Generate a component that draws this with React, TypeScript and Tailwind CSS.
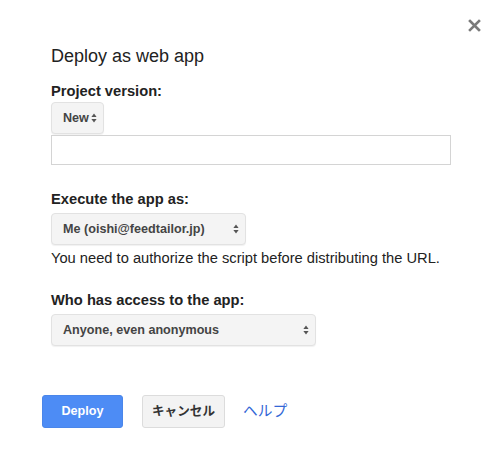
import React from 'react';

const font = { fontFamily: '"Liberation Sans", Arial, "Noto Sans CJK JP", sans-serif' };

const Arrows = () => (
  <svg width="6" height="10" viewBox="0 0 6 10" className="shrink-0">
    <path d="M3 0.5 L5.6 4 H0.4 Z" fill="#555" />
    <path d="M3 9.5 L5.6 6 H0.4 Z" fill="#555" />
  </svg>
);

const Select = ({ label, width }: { label: string; width: string }) => (
  <div
    className={`${width} h-[32px] flex items-center justify-between pl-[11px] pr-[6px] rounded-[4px] border border-[#e2e2e2] bg-[#f4f4f4] shadow-[0_1px_1px_rgba(0,0,0,0.06)] text-[12.6px] font-bold text-[#444]`}
  >
    <span>{label}</span>
    <Arrows />
  </div>
);

const Label = ({ children, className = '' }: { children: React.ReactNode; className?: string }) => (
  <div className={`text-[14.7px] leading-[17px] font-bold text-[#222] ${className}`}>{children}</div>
);

export default function App() {
  return (
    <div className="relative w-[500px] h-[453px] bg-white overflow-hidden" style={font}>
      {/* close */}
      <button className="absolute left-[467px] top-[18px] w-[14px] h-[14px] flex items-center justify-center">
        <svg width="13" height="13" viewBox="0 0 13 13">
          <path d="M2 2 L11 11 M11 2 L2 11" stroke="#7a7a7a" strokeWidth="2.6" strokeLinecap="square" />
        </svg>
      </button>

      <div className="pl-[42px] pt-[46px]">
        <div className="pl-[9px]">
          <h1 className="text-[18px] leading-[21px] text-[#222]">Deploy as web app</h1>

          <Label className="mt-[16px]">Project version:</Label>
          <div className="mt-[2px]">
            <Select label="New" width="w-[53px]" />
          </div>
          <input
            className="mt-[1px] block w-[400px] h-[30px] border border-[#d4d4d4] bg-white outline-none"
            readOnly
          />

          <Label className="mt-[26px]">Execute the app as:</Label>
          <div className="mt-[5px]">
            <Select label="Me (oishi@feedtailor.jp)" width="w-[195px]" />
          </div>
          <p className="mt-[5px] text-[14.7px] leading-[17px] text-[#222]">
            You need to authorize the script before distributing the URL.
          </p>

          <Label className="mt-[25px]">Who has access to the app:</Label>
          <div className="mt-[5px]">
            <Select label="Anyone, even anonymous" width="w-[265px]" />
          </div>
        </div>

        <div className="mt-[49px] flex items-center">
          <button className="w-[81px] h-[33px] rounded-[3px] bg-[#4d8cf5] border border-[#4a86ea] text-white text-[12.6px] font-bold">
            Deploy
          </button>
          <button className="ml-[19px] w-[83px] h-[33px] rounded-[3px] bg-[#f3f3f3] border border-[#dcdcdc] text-[#333] text-[12.6px] font-bold">
            キャンセル
          </button>
          <a className="ml-[18px] text-[14.7px] text-[#3367d6]" href="#">
            ヘルプ
          </a>
        </div>
      </div>
    </div>
  );
}
